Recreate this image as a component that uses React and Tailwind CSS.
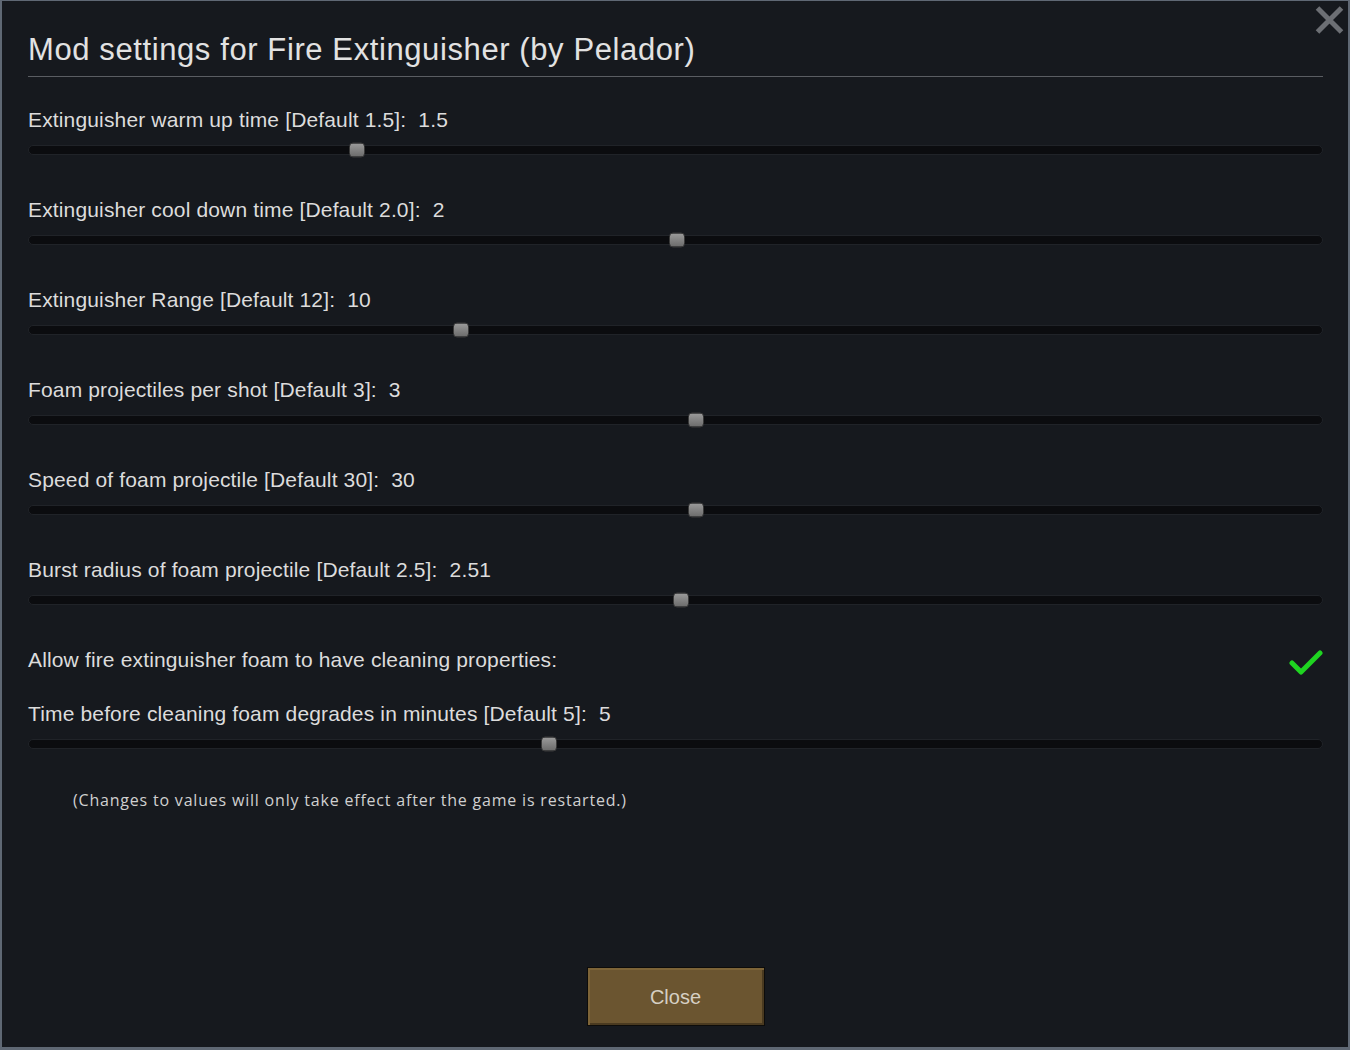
import React from "react";

const sliders = [
  { label: "Extinguisher warm up time [Default 1.5]:", value: "1.5", pos: 356 },
  { label: "Extinguisher cool down time [Default 2.0]:", value: "2", pos: 676 },
  { label: "Extinguisher Range [Default 12]:", value: "10", pos: 460 },
  { label: "Foam projectiles per shot [Default 3]:", value: "3", pos: 695 },
  { label: "Speed of foam projectile [Default 30]:", value: "30", pos: 695 },
  { label: "Burst radius of foam projectile [Default 2.5]:", value: "2.51", pos: 680 },
];

const Slider = ({ pos }) => (
  <div className="relative h-[10px] rounded-full bg-[#0b0c0f] border border-[#202328]">
    <div
      className="absolute top-1/2 -translate-y-1/2 -translate-x-1/2 w-[16px] h-[15px] rounded-[4px] bg-gradient-to-b from-[#9a9a9a] to-[#6c6c6c] border border-[#3a3a3a]"
      style={{ left: pos - 28 }}
    />
  </div>
);

const SliderRow = ({ label, value, pos }) => (
  <div className="h-[90px] pt-[7px]">
    <div className="text-[21px] leading-[24px] tracking-[0.15px] text-[#dcdcdc] whitespace-pre">
      {label}  {value}
    </div>
    <div className="mt-[13px]">
      <Slider pos={pos} />
    </div>
  </div>
);

export default function App() {
  return (
    <div className="w-[1350px] h-[1050px] bg-[#16191e] border-t border-x-2 border-b-[3px] border-[#5f6874] relative font-['Liberation_Sans',Arial,sans-serif] overflow-hidden">
      <button className="absolute top-[4px] right-[3px] w-[31px] h-[30px]">
        <svg viewBox="0 0 30 30" className="w-full h-full">
          <path d="M3 3 L27 27 M27 3 L3 27" stroke="#6c6f74" strokeWidth="5" />
        </svg>
      </button>
      <div className="pl-[26px] pr-[25px]">
        <div className="pt-[31px] pb-[8px] border-b border-[#5a5d62] text-[31px] leading-[36px] tracking-[0.6px] text-[#e2e2e2]">
          Mod settings for Fire Extinguisher (by Pelador)
        </div>
        <div className="pt-[24px]">
          {sliders.map((s) => (
            <SliderRow key={s.label} {...s} />
          ))}
          <div className="flex items-start justify-between h-[54px] pt-[7px]">
            <div className="text-[21px] leading-[24px] tracking-[0.15px] text-[#dcdcdc]">
              Allow fire extinguisher foam to have cleaning properties:
            </div>
            <svg viewBox="0 0 34 30" className="w-[34px] h-[30px] mt-[-1px]">
              <path d="M3 16 L12 25 L31 6" stroke="#1fd421" strokeWidth="5" fill="none" strokeLinecap="round" strokeLinejoin="round" />
            </svg>
          </div>
          <SliderRow
            label="Time before cleaning foam degrades in minutes [Default 5]:"
            value="5"
            pos={548}
          />
          <div className="pl-[45px] mt-[5px] text-[16px] leading-[20px] tracking-[0.8px] text-[#d0d0d0] font-['Open_Sans',sans-serif]">
            (Changes to values will only take effect after the game is restarted.)
          </div>
        </div>
      </div>
      <div className="absolute left-0 right-0 bottom-[21px] flex justify-center">
        <button className="ml-[1px] w-[178px] h-[59px] bg-[#6b5530] border border-[#0d0c0a] shadow-[inset_2px_2px_0_#7d6438,inset_-2px_-2px_0_#4a3a20] text-[20px] text-[#d6d0c4]">
          Close
        </button>
      </div>
    </div>
  );
}
